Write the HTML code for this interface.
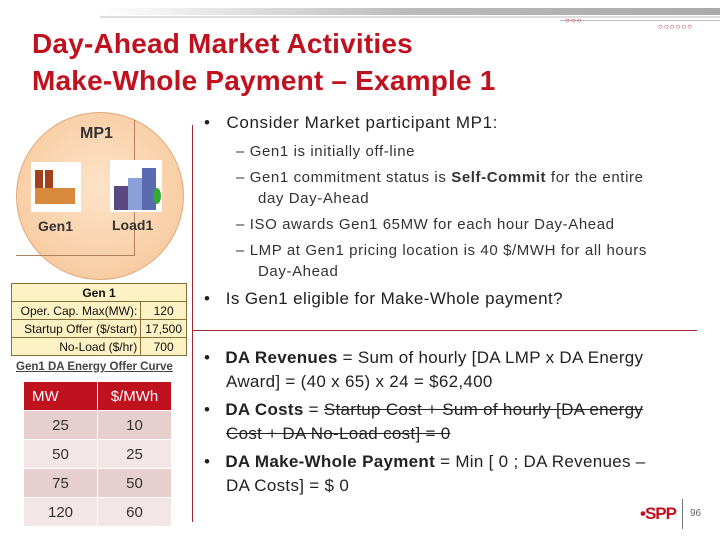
<!DOCTYPE html>
<html><head><meta charset="utf-8"><style>
body{margin:0;width:720px;height:540px;position:relative;background:#fff;font-family:"Liberation Sans",sans-serif;overflow:hidden}
.a{position:absolute}
.t{color:#c0111f;font-weight:bold;font-size:28px;left:32px;line-height:37px;letter-spacing:0.2px}
.r{color:#222}
.s{font-size:15px;color:#333;line-height:21px;letter-spacing:0.6px}
table{border-collapse:collapse}
.g td{border:1px solid #8a6d3b;background:#fdf2c4;font-size:12px;padding:0 3px;height:17px;color:#111}
.c td{width:73px;height:28px;text-align:center;font-size:15px;color:#333;border:1px solid #fff;padding:0}
</style></head><body>
<div class="a" style="left:100px;top:8px;width:620px;height:7px;background:linear-gradient(90deg,#fff,#bbb 50%,#aaa)"></div>
<div class="a" style="left:100px;top:16px;width:620px;height:2px;background:#ddd"></div>
<div class="a" style="left:560px;top:20px;width:160px;height:1px;background:#bbb"></div>
<div class="a" style="left:565px;top:16px;color:#c0111f;font-size:8px;letter-spacing:1px">○○○</div>
<div class="a" style="left:658px;top:22px;color:#c0111f;font-size:8px;letter-spacing:1px">○○○○○○</div>
<div class="a t" style="top:25px">Day-Ahead Market Activities<br>Make-Whole Payment – Example 1</div>

<div class="a" style="left:16px;top:112px;width:166px;height:166px;border-radius:50%;background:radial-gradient(circle at 50% 45%,#fde3c8,#f6c494);border:1px solid #e0a878"></div>
<div class="a" style="left:134px;top:120px;width:1px;height:135px;background:#b08060"></div>
<div class="a" style="left:16px;top:255px;width:119px;height:1px;background:#b08060"></div>
<div class="a" style="left:80px;top:125px;font-size:16px;font-weight:bold;color:#333">MP1</div>
<div class="a" style="left:31px;top:162px;width:50px;height:50px;background:#fff"></div>
<div class="a" style="left:35px;top:170px;width:8px;height:22px;background:#a0401c"></div>
<div class="a" style="left:45px;top:170px;width:8px;height:22px;background:#a0401c"></div>
<div class="a" style="left:35px;top:188px;width:40px;height:16px;background:#d88a3c"></div>
<div class="a" style="left:110px;top:160px;width:52px;height:52px;background:#fff"></div>
<div class="a" style="left:114px;top:186px;width:14px;height:24px;background:#5a4a80"></div>
<div class="a" style="left:128px;top:178px;width:14px;height:32px;background:#8aa0d8"></div>
<div class="a" style="left:142px;top:168px;width:14px;height:42px;background:#5a6ab0"></div>
<div class="a" style="left:153px;top:188px;width:8px;height:16px;border-radius:50%;background:#3a3"></div>
<div class="a" style="left:38px;top:218px;font-size:14px;font-weight:bold;color:#333">Gen1</div>
<div class="a" style="left:112px;top:217px;font-size:14px;font-weight:bold;color:#333">Load1</div>

<div class="a" style="left:192px;top:125px;width:1px;height:397px;background:#9b2a2a"></div>
<div class="a" style="left:192px;top:330px;width:505px;height:1px;background:#9b2a2a"></div>

<table class="a g" style="left:11px;top:283px;width:176px">
<tr><td colspan="2" style="text-align:center;font-weight:bold">Gen 1</td></tr>
<tr><td style="text-align:right">Oper. Cap. Max(MW):</td><td style="text-align:center">120</td></tr>
<tr><td style="text-align:right">Startup Offer ($/start)</td><td style="text-align:center">17,500</td></tr>
<tr><td style="text-align:right">No-Load ($/hr)</td><td style="text-align:center">700</td></tr>
</table>
<div class="a" style="left:16px;top:361px;font-size:11.5px;font-weight:bold;color:#444;text-decoration:underline">Gen1 DA Energy Offer Curve</div>
<table class="a c" style="left:23px;top:381px">
<tr><td style="background:#c0111f;color:#fff;text-align:left;padding-left:8px;width:65px">MW</td><td style="background:#c0111f;color:#fff">$/MWh</td></tr>
<tr style="background:#e8cfcf"><td>25</td><td>10</td></tr>
<tr style="background:#f3e6e6"><td>50</td><td>25</td></tr>
<tr style="background:#e8cfcf"><td>75</td><td>50</td></tr>
<tr style="background:#f3e6e6"><td>120</td><td>60</td></tr>
</table>

<div class="a r" style="left:204px;top:113px;font-size:17px;letter-spacing:0.6px">•&nbsp;&nbsp; Consider Market participant MP1:</div>
<div class="a s" style="left:236px;top:141px;width:470px">
<div>– Gen1 is initially off-line</div>
<div style="padding-left:22px;text-indent:-22px;margin-top:5px">– Gen1 commitment status is <b>Self-Commit</b> for the entire<br>day Day-Ahead</div>
<div style="margin-top:5px">– ISO awards Gen1 65MW for each hour Day-Ahead</div>
<div style="padding-left:22px;text-indent:-22px;margin-top:5px">– LMP at Gen1 pricing location is 40 $/MWH for all hours<br>Day-Ahead</div>
</div>
<div class="a r" style="left:204px;top:289px;font-size:17px;letter-spacing:0.4px">•&nbsp;&nbsp; Is Gen1 eligible for Make-Whole payment?</div>
<div class="a r" style="left:204px;top:346px;width:500px;font-size:17px;line-height:24px;letter-spacing:0.3px">
<div style="padding-left:22px;text-indent:-22px">•&nbsp;&nbsp; <b>DA Revenues</b> = Sum of hourly [DA LMP x DA Energy<br>Award] = (40 x 65) x 24 = $62,400</div>
<div style="padding-left:22px;text-indent:-22px;margin-top:4px">•&nbsp;&nbsp; <b>DA Costs</b> = <s>Startup Cost + Sum of hourly [DA energy<br>Cost + DA No-Load cost] = 0</s></div>
<div style="padding-left:22px;text-indent:-22px;margin-top:4px">•&nbsp;&nbsp; <b>DA Make-Whole Payment</b> = Min [ 0 ; DA Revenues –<br>DA Costs] = $ 0</div>
</div>
<div class="a" style="left:640px;top:504px;color:#c0111f;font-weight:bold;font-size:17px;letter-spacing:-1px">•SPP</div>
<div class="a" style="left:682px;top:499px;width:1px;height:30px;background:#777"></div>
<div class="a" style="left:690px;top:508px;font-size:10px;color:#666">96</div>
</body></html>
